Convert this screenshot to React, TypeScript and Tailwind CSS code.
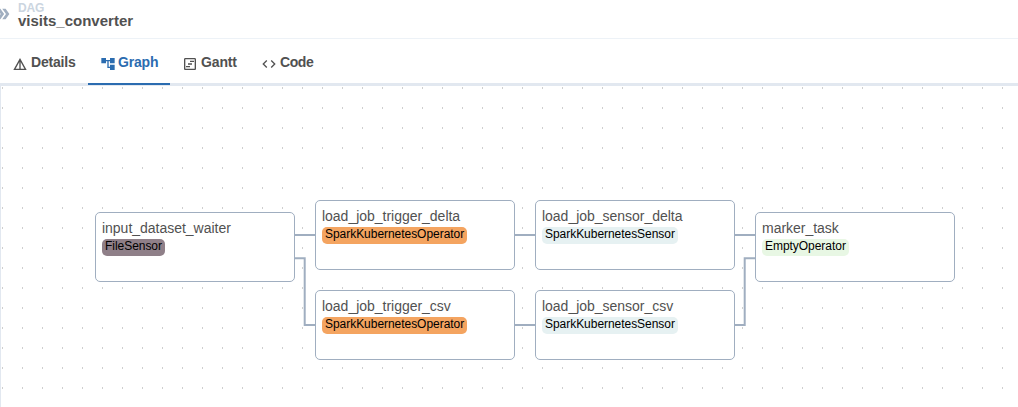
import { MdAccountTree, MdCode, MdDetails, MdDoubleArrow, MdOutlineViewTimeline } from "react-icons/md";
import type { IconType } from "react-icons";

type Tab = { label: string; icon: IconType; className: string; labelClass: string };

const tabs: Tab[] = [
  { label: "Details", icon: MdDetails, className: "w-[88px] text-[#515151]", labelClass: "ml-[3px] tracking-[-0.2px]" },
  { label: "Graph", icon: MdAccountTree, className: "w-[82px] text-[#2b6cb0] border-b-2 border-[#2b6cb0]", labelClass: "ml-[2px] tracking-[-0.2px]" },
  { label: "Gantt", icon: MdOutlineViewTimeline, className: "w-[79px] text-[#515151]", labelClass: "ml-[3px] tracking-[-0.15px]" },
  { label: "Code", icon: MdCode, className: "w-[77px] text-[#515151]", labelClass: "ml-[3px] tracking-[-0.4px]" },
];

type TaskNode = { name: string; operator: string; position: string; badge: string };

const nodes: TaskNode[] = [
  { name: "input_dataset_waiter", operator: "FileSensor", position: "left-[94px] top-[126px]", badge: "bg-[#8f7f88]" },
  { name: "load_job_trigger_delta", operator: "SparkKubernetesOperator", position: "left-[314px] top-[114px]", badge: "bg-[#f4a460]" },
  { name: "load_job_trigger_csv", operator: "SparkKubernetesOperator", position: "left-[314px] top-[204px]", badge: "bg-[#f4a460]" },
  { name: "load_job_sensor_delta", operator: "SparkKubernetesSensor", position: "left-[534px] top-[114px]", badge: "bg-[#e6f1f2]" },
  { name: "load_job_sensor_csv", operator: "SparkKubernetesSensor", position: "left-[534px] top-[204px]", badge: "bg-[#e6f1f2]" },
  { name: "marker_task", operator: "EmptyOperator", position: "left-[754px] top-[126px]", badge: "bg-[#e8f7e4]" },
];

const edges = [
  "M293 149H315",
  "M293 172.3H303.7V239H315",
  "M513 149H535",
  "M513 239H535",
  "M733 149H755",
  "M733 239H743.7V172.3H755",
];

export default function App() {
  return (
    <div className="flex h-[407px] w-[1018px] flex-col overflow-hidden bg-white font-['Liberation_Sans',sans-serif] text-[#515151]">
      <header className="flex h-[39px] shrink-0 border-b border-[#edf2f7]">
        <MdDoubleArrow className="-ml-[6px] mt-[5px] size-[18px] shrink-0 text-[#a0aec0]" />
        <div className="ml-[6px] flex flex-col pt-[2px] font-bold">
          <span className="text-[12px] leading-[12px] tracking-[-0.2px] text-[#cbd5e0]">DAG</span>
          <span className="text-[15px] leading-[14px]">visits_converter</span>
        </div>
      </header>
      <nav className="flex h-[47px] shrink-0 shadow-[inset_0_-3px_0_#e2e8f0]">
        {tabs.map(({ label, icon: Icon, className, labelClass }) => (
          <div key={label} className={`flex h-[46px] pl-3 ${className}`}>
            <Icon className="mt-[17px] size-4 shrink-0" />
            <span className={`mt-[13px] text-[14px] leading-5 font-bold ${labelClass}`}>{label}</span>
          </div>
        ))}
      </nav>
      <main className="relative grow border-l border-[#e2e8f0]">
        <svg className="absolute inset-0 size-full" fill="none" stroke="#a0aec0" strokeWidth="2">
          <defs>
            <pattern id="dots" width="20" height="20" x="1" y="1" patternUnits="userSpaceOnUse">
              <rect width="1" height="2" fill="#cfcfcf" stroke="none" />
            </pattern>
          </defs>
          <rect width="1017" height="321" fill="url(#dots)" stroke="none" />
          {edges.map((d) => (
            <path key={d} d={d} />
          ))}
        </svg>
        {nodes.map(({ name, operator, position, badge }) => (
          <div
            key={name}
            className={`absolute flex h-[70px] w-[200px] flex-col items-start rounded-[5px] border border-[#a0aec0] bg-white px-[6px] pt-[5px] ${position}`}
          >
            <span className="mb-px text-[14px] leading-[20px] tracking-[-0.02px]">{name}</span>
            <span className={`h-[17px] rounded-[5px] px-[3px] text-[12px] leading-[14px] tracking-[-0.04px] text-black ${badge}`}>{operator}</span>
          </div>
        ))}
      </main>
    </div>
  );
}
